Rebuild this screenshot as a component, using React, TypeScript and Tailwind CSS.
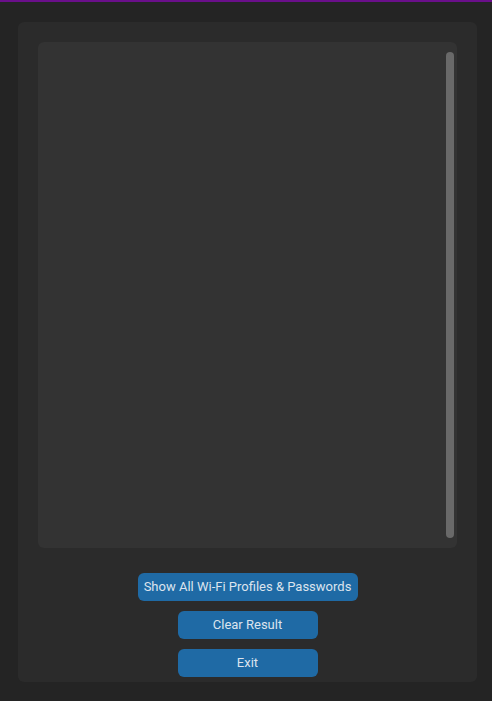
export default function App() {
  return (
    <div className="w-[492px] h-[701px] bg-[#242424] flex flex-col" style={{ fontFamily: 'Roboto, "Liberation Sans", sans-serif' }}>
      <div className="h-[2px] bg-[#6a0f8a]" />
      <div className="ml-[18px] mt-[20px] w-[459px] h-[660px] bg-[#2b2b2b] rounded-[6px] flex flex-col items-center pt-[20px]">
        <div className="w-[419px] h-[506px] bg-[#333333] rounded-[6px] flex justify-end pt-[10px] pr-[3px]">
          <div className="w-[8px] h-[486px] bg-[#696969] rounded-[4px]" />
        </div>
        <button className="mt-[25px] w-[220px] h-[28px] bg-[#1f6aa5] rounded-[6px] text-[13px] text-[#dce4ee] flex items-center justify-center">
          Show All Wi-Fi Profiles &amp; Passwords
        </button>
        <button className="mt-[10px] w-[140px] h-[28px] bg-[#1f6aa5] rounded-[6px] text-[13px] text-[#dce4ee] flex items-center justify-center">
          Clear Result
        </button>
        <button className="mt-[10px] w-[140px] h-[28px] bg-[#1f6aa5] rounded-[6px] text-[13px] text-[#dce4ee] flex items-center justify-center">
          Exit
        </button>
      </div>
    </div>
  );
}
